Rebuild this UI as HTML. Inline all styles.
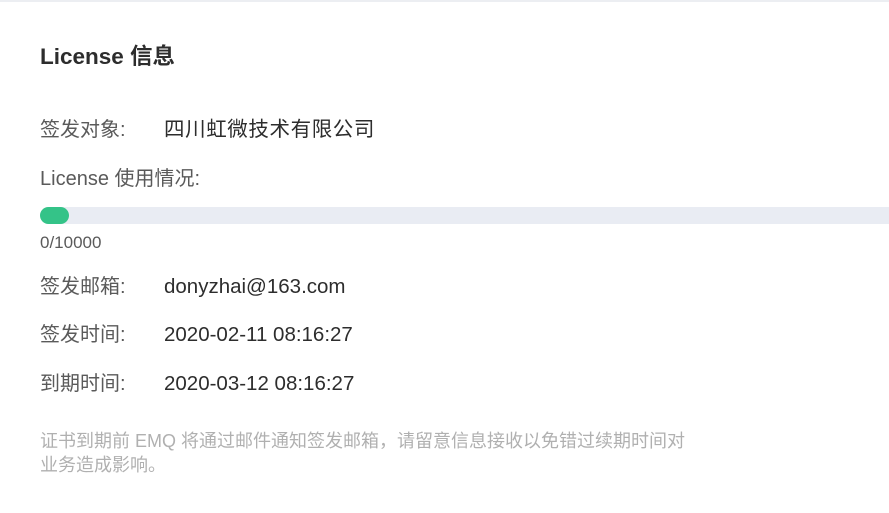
<!DOCTYPE html>
<html><head><meta charset="utf-8"><style>
body{margin:0;width:889px;height:513px;background:#fff;overflow:hidden;font-family:"Liberation Sans","Noto Sans CJK SC",sans-serif;position:relative}
.top{position:absolute;left:0;top:0;width:889px;height:2px;background:#eceef2}
.t{position:absolute;white-space:nowrap}
h1{position:absolute;left:40px;top:43px;margin:0;font-size:22.5px;font-weight:bold;color:#2d2d2d;line-height:28px}
.l{left:40px;font-size:20px;color:#5a5a5a;line-height:24px}
.v{left:164px;font-size:20.5px;color:#2d2d2d;line-height:24px}
.bar{position:absolute;left:40px;top:207px;width:870px;height:17px;background:#e9ecf3;border-radius:9px}
.fill{position:absolute;left:40px;top:207px;width:29px;height:17px;background:#34c388;border-radius:9px}
.note{left:40px;top:429px;font-size:18px;color:#b0b0b0;line-height:24px;white-space:nowrap}
</style></head><body>
<div class="top"></div>
<h1>License 信息</h1>
<div class="t l" style="top:118px">签发对象:</div><div class="t v" style="top:118px;letter-spacing:0.6px">四川虹微技术有限公司</div>
<div class="t l" style="top:167px">License 使用情况:</div>
<div class="bar"></div><div class="fill"></div>
<div class="t" style="left:40px;top:233px;font-size:17px;color:#5a5a5a">0/10000</div>
<div class="t l" style="top:275px">签发邮箱:</div><div class="t v" style="top:275px">donyzhai@163.com</div>
<div class="t l" style="top:323px">签发时间:</div><div class="t v" style="top:323px">2020-02-11 08:16:27</div>
<div class="t l" style="top:372px">到期时间:</div><div class="t v" style="top:372px">2020-03-12 08:16:27</div>
<div class="t note">证书到期前 EMQ 将通过邮件通知签发邮箱，请留意信息接收以免错过续期时间对<br>业务造成影响。</div>
</body></html>
